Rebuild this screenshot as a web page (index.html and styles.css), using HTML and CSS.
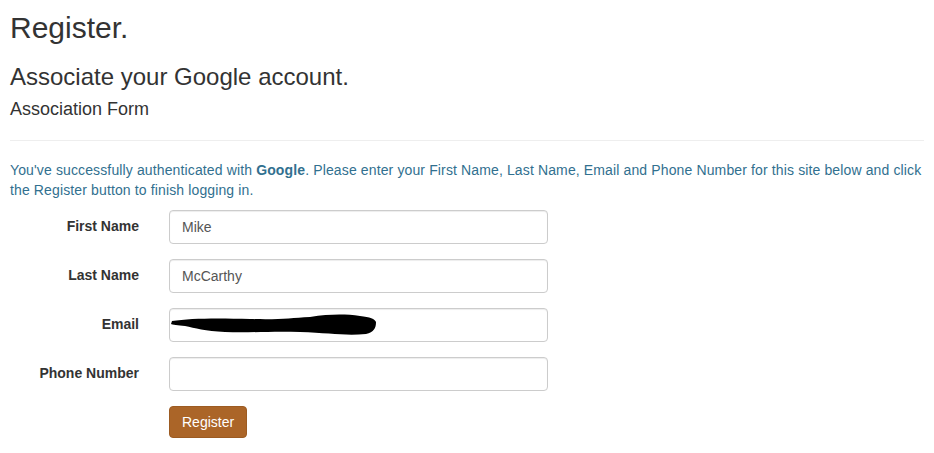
FILE: index.html
```html
<!DOCTYPE html>
<html>
<head>
<meta charset="utf-8">
<link rel="stylesheet" href="styles.css">
</head>
<body>
<div class="page">
  <h2 class="title">Register.</h2>
  <h3 class="subtitle">Associate your Google account.</h3>
  <h4 class="formtitle">Association Form</h4>
  <hr class="rule">
  <p class="info">You've successfully authenticated with <strong>Google</strong>. Please enter your First Name, Last Name, Email and Phone Number for this site below and click the Register button to finish logging in.</p>
  <form class="form">
    <div class="row">
      <label class="lbl">First Name</label>
      <div class="field"><input class="input" type="text" value="Mike"></div>
    </div>
    <div class="row">
      <label class="lbl">Last Name</label>
      <div class="field"><input class="input" type="text" value="McCarthy"></div>
    </div>
    <div class="row">
      <label class="lbl">Email</label>
      <div class="field">
        <div class="input-wrap">
          <input class="input" type="text" value="">
          <svg class="redact" width="210" height="24" viewBox="0 0 210 24">
            <path d="M2 8 C20 5 50 5 80 6 C110 7 120 5 140 4 C160 1 175 1 190 3 C200 4 205 6 206 9 C206 15 204 19 196 21 C175 23 160 20 130 19 C100 18 80 20 55 19 C35 18 25 15 15 13 C8 12 2 12 1 11 Z" fill="#000"/>
          </svg>
        </div>
      </div>
    </div>
    <div class="row">
      <label class="lbl">Phone Number</label>
      <div class="field"><input class="input" type="text" value=""></div>
    </div>
    <div class="row">
      <div class="lbl"></div>
      <div class="field"><button class="btn" type="button">Register</button></div>
    </div>
  </form>
</div>
</body>
</html>
```

FILE: styles.css
```css
* { box-sizing: border-box; }
html, body { margin: 0; padding: 0; background: #fff; }
body {
  font-family: "Liberation Sans", Arial, sans-serif;
  font-size: 14px;
  line-height: 1.42857;
  color: #333;
}
.page { padding: 0 10px; }
.title {
  font-size: 30px;
  font-weight: 500;
  line-height: 1.1;
  margin: 11px 0 0;
}
.subtitle {
  font-size: 24px;
  font-weight: 500;
  line-height: 1.1;
  margin: 20px 0 0;
}
.formtitle {
  font-size: 18px;
  font-weight: 500;
  line-height: 1.1;
  margin: 10px 0 0;
}
.rule {
  border: 0;
  border-top: 1px solid #eee;
  margin: 20px 0 0;
}
.info {
  color: #31708f;
  letter-spacing: 0.13px;
  margin: 20px 0 0;
}
.form { margin-top: 9px; }
.row {
  display: flex;
  align-items: center;
  margin-bottom: 15px;
}
.lbl {
  width: 144px;
  padding-right: 15px;
  text-align: right;
  font-weight: bold;
  flex: none;
}
.field {
  width: 409px;
  padding-left: 15px;
  padding-right: 15px;
  flex: none;
}
.input-wrap { position: relative; }
.input {
  display: block;
  width: 100%;
  height: 34px;
  padding: 6px 12px;
  font-family: inherit;
  font-size: 14px;
  color: #555;
  background: #fff;
  border: 1px solid #ccc;
  border-radius: 4px;
  box-shadow: inset 0 1px 1px rgba(0,0,0,.075);
}
.redact {
  position: absolute;
  left: 1px;
  top: 5px;
}
.btn {
  font-family: inherit;
  font-size: 14px;
  color: #fff;
  background: #ab6528;
  border: 1px solid #9c5b22;
  border-radius: 4px;
  padding: 6px 12px;
  line-height: 18px;
}
```
